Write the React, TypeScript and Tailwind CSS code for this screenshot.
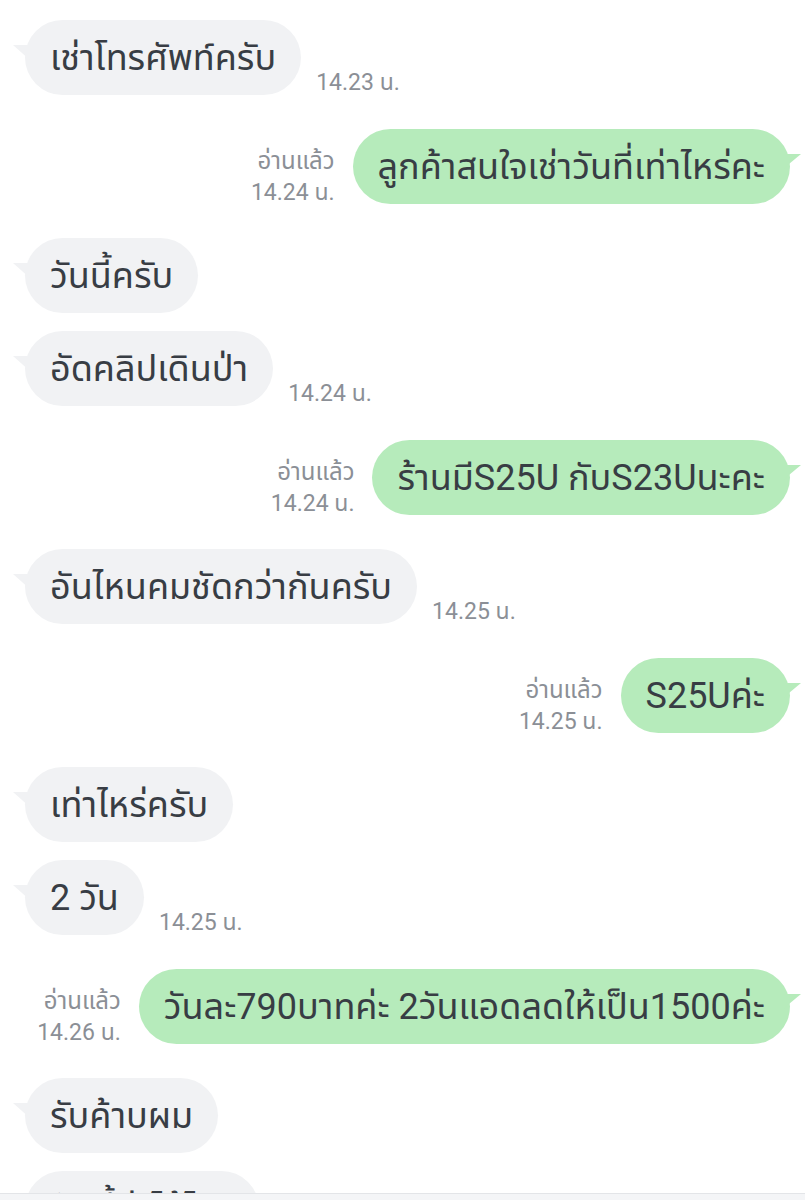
import React from 'react';

type Msg = {
  side: 'L' | 'R';
  text: string;
  time?: string;
  read?: boolean;
  gap: 'group' | 'same';
};

const messages: Msg[] = [
  { side: 'L', text: 'เช่าโทรศัพท์ครับ', time: '14.23 น.', gap: 'group' },
  { side: 'R', text: 'ลูกค้าสนใจเช่าวันที่เท่าไหร่คะ', time: '14.24 น.', read: true, gap: 'group' },
  { side: 'L', text: 'วันนี้ครับ', gap: 'group' },
  { side: 'L', text: 'อัดคลิปเดินป่า', time: '14.24 น.', gap: 'same' },
  { side: 'R', text: 'ร้านมีS25U กับS23Uนะคะ', time: '14.24 น.', read: true, gap: 'group' },
  { side: 'L', text: 'อันไหนคมชัดกว่ากันครับ', time: '14.25 น.', gap: 'group' },
  { side: 'R', text: 'S25Uค่ะ', time: '14.25 น.', read: true, gap: 'group' },
  { side: 'L', text: 'เท่าไหร่ครับ', gap: 'group' },
  { side: 'L', text: '2 วัน', time: '14.25 น.', gap: 'same' },
  { side: 'R', text: 'วันละ790บาทค่ะ 2วันแอดลดให้เป็น1500ค่ะ', time: '14.26 น.', read: true, gap: 'group' },
  { side: 'L', text: 'รับค้าบผม', gap: 'group' },
  { side: 'L', text: 'อันนี้ค่าไม้ไหว', gap: 'same' },
];

function Bubble({ msg }: { msg: Msg }) {
  const left = msg.side === 'L';
  return (
    <div
      className={`relative h-[75px] flex items-center px-[25px] rounded-[38px] text-[36px] leading-[44px] text-[#383d44] whitespace-nowrap ${
        left ? 'bg-[#f1f2f4]' : 'bg-[#b6ebbb]'
      }`}
    >
      {left ? (
        <svg className="absolute left-[-12px] top-[25px]" width="18" height="16" viewBox="0 0 18 16">
          <path d="M0 0 L18 0 L18 16 Z" fill="#f1f2f4" />
        </svg>
      ) : (
        <svg className="absolute right-[-11px] top-[25px]" width="18" height="15" viewBox="0 0 18 15">
          <path d="M18 0 L0 0 L0 15 Z" fill="#b6ebbb" />
        </svg>
      )}
      {msg.text}
    </div>
  );
}

export default function App() {
  return (
    <div
      className="w-[805px] h-[1200px] bg-white overflow-hidden relative"
      style={{ fontFamily: '"Roboto", "Noto Sans", "Noto Sans Thai", sans-serif' }}
    >
      <div className="pt-[20px] pl-[25px] pr-[15px] flex flex-col">
        {messages.map((m, i) => (
          <div
            key={i}
            className={`flex items-end ${m.side === 'L' ? 'justify-start' : 'justify-end'} ${
              i === 0 ? '' : m.gap === 'group' ? 'mt-[34px]' : 'mt-[18px]'
            }`}
          >
            {m.side === 'R' && (
              <div className="mr-[18px] -mb-[4px] text-right text-[23px] leading-[31px] text-[#8b8f96]">
                <div className="text-[24px]">อ่านแล้ว</div>
                <div>{m.time}</div>
              </div>
            )}
            <Bubble msg={m} />
            {m.side === 'L' && m.time && (
              <div className="ml-[15px] -mb-[2px] text-[23px] leading-[28px] text-[#8b8f96]">{m.time}</div>
            )}
          </div>
        ))}
      </div>
      <div className="absolute left-0 right-0 bottom-0 h-[7px] bg-[#f4f5f7] border-t border-[#e3e5e8]" />
    </div>
  );
}
